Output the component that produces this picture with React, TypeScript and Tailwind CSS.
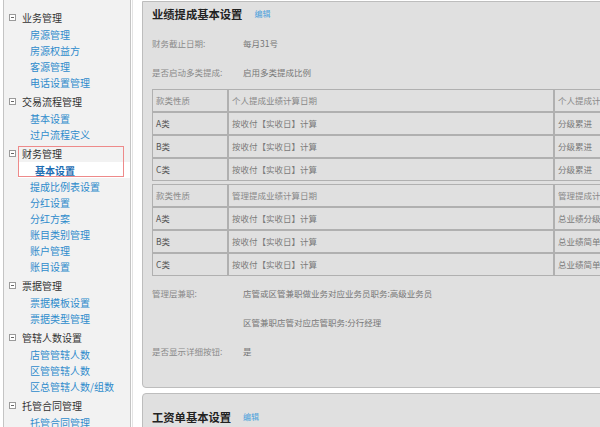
import React from "react";

const groups = [
  { title: "业务管理", items: ["房源管理", "房源权益方", "客源管理", "电话设置管理"] },
  { title: "交易流程管理", items: ["基本设置", "过户流程定义"] },
  {
    title: "财务管理",
    items: ["基本设置", "提成比例表设置", "分红设置", "分红方案", "账目类别管理", "账户管理", "账目设置"],
    active: 0,
  },
  { title: "票据管理", items: ["票据模板设置", "票据类型管理"] },
  { title: "管辖人数设置", items: ["店管管辖人数", "区管管辖人数", "区总管辖人数/组数"] },
  { title: "托管合同管理", items: ["托管合同管理"] },
];

const font = { fontFamily: '"Noto Sans CJK SC", "Noto Sans", sans-serif' };

function Minus() {
  return (
    <span className="flex h-[7px] w-[7px] items-center justify-center border border-[#9a9a9a] bg-white">
      <span className="h-px w-[3px] bg-[#666]" />
    </span>
  );
}

function Sidebar() {
  return (
    <aside className="ml-[3px] h-full w-[128px] shrink-0 border-x border-[#c4c4c4] bg-[#f2f2f2] pt-[8px]">
      {groups.map((g, gi) => (
        <div key={g.title} className={gi === 0 ? "relative" : "relative mt-[2px]"}>
          <div className="flex h-[18px] items-center pl-[5px] text-[10px] text-[#333]">
            <Minus />
            <span className="ml-[6px]">{g.title}</span>
          </div>
          {g.items.map((it, i) =>
            g.active === i ? (
              <div key={it} className="ml-[14px] flex h-[16px] items-center bg-white pl-[17px] text-[10px] font-bold text-[#1d6db3]">
                {it}
              </div>
            ) : (
              <div key={it + i} className="flex h-[16px] items-center pl-[26px] text-[10px] text-[#2e8bcc]">
                {it}
              </div>
            )
          )}
          {g.active !== undefined && (
            <div className="pointer-events-none absolute left-[14px] top-[2px] h-[31px] w-[106px] border border-[#ee8a8a]" />
          )}
        </div>
      ))}
    </aside>
  );
}

type Row = [string, string, string];

function DataTable({ head, rows }: { head: Row; rows: Row[] }) {
  const cell = "h-[23px] border border-[#b0b0b0] px-[3px] text-left align-middle text-[8.5px] font-normal";
  return (
    <table className="border-separate border-spacing-0" style={{ width: 560 }}>
      <colgroup>
        <col style={{ width: 76 }} />
        <col style={{ width: 326 }} />
        <col />
      </colgroup>
      <thead>
        <tr>
          {head.map((h) => (
            <th key={h} className={cell + " text-[#888]"}>
              {h}
            </th>
          ))}
        </tr>
      </thead>
      <tbody>
        {rows.map((r) => (
          <tr key={r[0]}>
            <td className={cell + " text-[#555]"}>{r[0]}</td>
            <td className={cell + " text-[#7a7a7a]"}>{r[1]}</td>
            <td className={cell + " whitespace-nowrap text-[#7a7a7a]"}>{r[2]}</td>
          </tr>
        ))}
      </tbody>
    </table>
  );
}

function Field({ label, value, className }: { label: string; value: string; className?: string }) {
  return (
    <div className={"flex items-center text-[8.5px] " + (className ?? "")}>
      <span className="w-[91px] text-[#8a8a8a]">{label}</span>
      <span className="text-[#777]">{value}</span>
    </div>
  );
}

function Title({ text }: { text: string }) {
  return (
    <div className="flex h-[24px] items-center">
      <h2 className="text-[11.3px] font-bold text-[#222]">{text}</h2>
      <a className="ml-[12px] text-[8px] text-[#4aa0dc]">编辑</a>
    </div>
  );
}

export default function App() {
  const calc = "按收付【实收日】计算";
  return (
    <div className="flex h-[427px] w-[600px] overflow-hidden bg-white" style={font}>
      <Sidebar />
      <div className="ml-[1px] h-full w-px bg-[#e4e4e4]" />
      <main className="ml-[9px] min-w-0 flex-1 overflow-hidden">
        <section className="mt-px w-[720px] rounded-bl-[4px] border border-[#bdbdbd] bg-[#e0e0e0] pb-[21px] pl-[9px]">
          <Title text="业绩提成基本设置" />
          <Field label="财务截止日期:" value="每月31号" className="mt-[2px] h-[30px]" />
          <Field label="是否启动多类提成:" value="启用多类提成比例" className="h-[28px]" />
          <div className="mt-[3px]">
            <DataTable
              head={["款类性质", "个人提成业绩计算日期", "个人提成计算方式"]}
              rows={[
                ["A类", calc, "分级累进"],
                ["B类", calc, "分级累进"],
                ["C类", calc, "分级累进"],
              ]}
            />
          </div>
          <div className="mt-[3px]">
            <DataTable
              head={["款类性质", "管理提成业绩计算日期", "管理提成计算方式"]}
              rows={[
                ["A类", calc, "总业绩分级累进"],
                ["B类", calc, "总业绩简单单一比例"],
                ["C类", calc, "总业绩简单单一比例"],
              ]}
            />
          </div>
          <Field
            label="管理层兼职:"
            value="店管或区管兼职做业务对应业务员职务:高级业务员"
            className="mt-[3px] h-[29px]"
          />
          <Field label="" value="区管兼职店管对应店管职务:分行经理" className="h-[29px]" />
          <Field label="是否显示详细按钮:" value="是" className="h-[29px]" />
        </section>
        <section className="mt-[5px] h-[80px] w-[720px] rounded-tl-[4px] border border-[#bdbdbd] bg-[#e0e0e0] pl-[9px] pt-[11px]">
          <Title text="工资单基本设置" />
        </section>
      </main>
    </div>
  );
}
